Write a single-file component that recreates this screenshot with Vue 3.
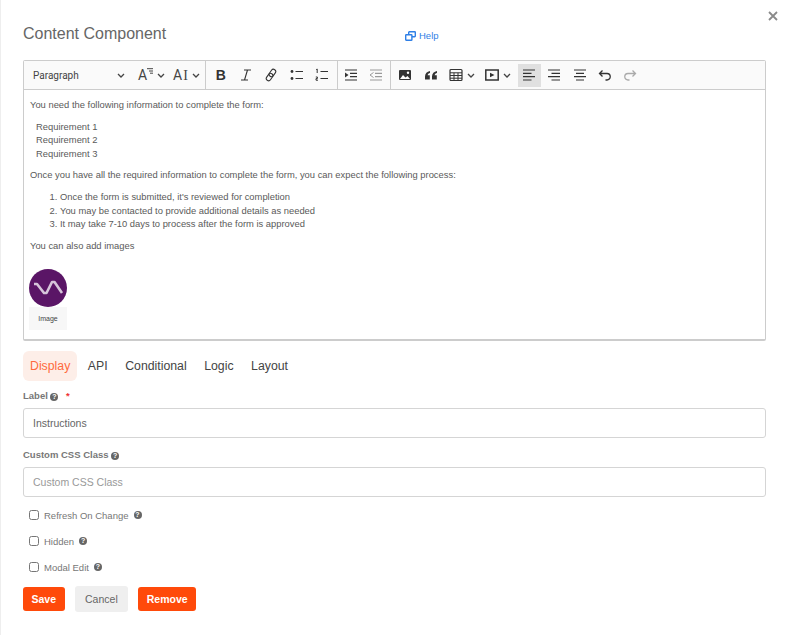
<template>
  <div class="modal">
    <button class="close" aria-label="Close">
      <svg width="10" height="10" viewBox="0 0 10 10"><path d="M1 1l8 8M9 1l-8 8" stroke="#8a8a8a" stroke-width="1.8" fill="none" /></svg>
    </button>
    <div class="header">
      <h2>Content Component</h2>
      <a class="help">
        <svg width="11" height="10" viewBox="0 0 11 10" fill="none" stroke="#2f7fe6" stroke-width="1.4">
          <rect x="3.7" y="0.7" width="6.6" height="5" rx="0.6" />
          <rect x="0.7" y="3.7" width="6.2" height="5.6" rx="0.6" fill="#fff" />
        </svg>
        Help
      </a>
    </div>

    <div class="editor">
      <div class="toolbar">
        <div class="group first">
          <div class="para">Paragraph<svg class="chev" viewBox="0 0 8 5"><path d="M1 1l3 3 3-3" /></svg></div>
          <div class="tool glyph">
            <span class="a-size">A<svg width="6" height="7" viewBox="0 0 6 7"><path d="M0 .7h6M2 3h4M3 5.2h3" stroke="#444" stroke-width="1" /></svg></span>
            <svg class="chev" viewBox="0 0 8 5"><path d="M1 1l3 3 3-3" /></svg>
          </div>
          <div class="tool glyph">
            <span class="a-i">A<i>I</i></span>
            <svg class="chev" viewBox="0 0 8 5"><path d="M1 1l3 3 3-3" /></svg>
          </div>
        </div>
        <div class="group marks">
          <div class="tool"><b class="bold">B</b></div>
          <div class="tool"><svg class="ic" viewBox="0 0 14 14"><path d="M5 2h7M2 12h7M8.5 2l-3 10" stroke="#333" stroke-width="1.1" fill="none" /></svg></div>
          <div class="tool"><svg class="ic" viewBox="0 0 14 14" fill="none" stroke="#333" stroke-width="1.1"><g transform="rotate(-55 7 7)"><rect x="0.500" y="4.700" width="8" height="4.600" rx="2.300" /><rect x="5.500" y="4.700" width="8" height="4.600" rx="2.300" /></g></svg></div>
          <div class="tool"><svg class="ic" viewBox="0 0 14 14"><circle cx="2" cy="3.5" r="1.4" fill="#333" /><circle cx="2" cy="10.5" r="1.4" fill="#333" /><path d="M5.5 3.5H13M5.5 10.5H13" stroke="#333" stroke-width="1.2" /></svg></div>
          <div class="tool"><svg class="ic" viewBox="0 0 14 14"><path d="M1.2 1.6l1-.6v4M.8 9h1.6v1.6H1v1.6h2M5.5 3.5H13M5.5 10.5H13" stroke="#333" stroke-width="1" fill="none" /></svg></div>
        </div>
        <div class="group indents">
          <div class="tool"><svg class="ic" viewBox="0 0 14 14"><path d="M1 2h12M6 5.3h7M6 8.7h7M1 12h12" stroke="#333" stroke-width="1.2" /><path d="M1 4.5L4.5 7 1 9.5z" fill="#333" /></svg></div>
          <div class="tool"><svg class="ic" viewBox="0 0 14 14"><path d="M1 2h12M6 5.3h7M6 8.7h7M1 12h12" stroke="#9a9a9a" stroke-width="1.2" /><path d="M4.5 4.5L1 7l3.5 2.5" fill="none" stroke="#9a9a9a" /></svg></div>
        </div>
        <div class="group last">
          <div class="tool"><svg class="ic" viewBox="0 0 14 14"><rect x="1" y="2" width="12" height="10" rx="1" fill="#333" /><path d="M2 11l3-4 2.500 2.500 2-1.500 2.500 3z" fill="#fff" /><circle cx="10" cy="4.800" r="1.200" fill="#fff" /></svg></div>
          <div class="tool"><svg class="ic" viewBox="0 0 14 14" fill="#333"><path d="M6 3C3 3.500 1 5.500 1 8.500V11.500h4.800V7.300H3.600C3.800 6 4.700 5.200 6 5zM13 3c-3 .5-5 2.500-5 5.500v3h4.800V7.300h-2.200C10.800 6 11.700 5.200 13 5z" /></svg></div>
          <div class="tool drop"><svg class="ic" viewBox="0 0 14 14" fill="none" stroke="#333" stroke-width="1"><rect x="1" y="1.500" width="12" height="11" rx="1" stroke-width="1.200" /><path d="M1 4.800h12M1 7.500h12M1 10.200h12M5 4.800v8M9 4.800v8" /></svg><svg class="chev" viewBox="0 0 8 5"><path d="M1 1l3 3 3-3" /></svg></div>
          <div class="tool drop"><svg class="ic" viewBox="0 0 14 14"><rect x="0.800" y="2" width="12.400" height="10" fill="none" stroke="#333" stroke-width="1.500" /><path d="M5 4.800L9.500 7 5 9.200z" fill="#333" /></svg><svg class="chev" viewBox="0 0 8 5"><path d="M1 1l3 3 3-3" /></svg></div>
          <div class="tool on"><svg class="ic" viewBox="0 0 14 14"><path d="M1 2h12M1 5.300h8.500M1 8.700h12M1 12h8.500" stroke="#333" stroke-width="1.200" /></svg></div>
          <div class="tool"><svg class="ic" viewBox="0 0 14 14"><path d="M1 2h12M4.500 5.300H13M1 8.700h12M4.500 12H13" stroke="#333" stroke-width="1.200" /></svg></div>
          <div class="tool"><svg class="ic" viewBox="0 0 14 14"><path d="M1 2h12M3 5.300h8M1 8.700h12M3 12h8" stroke="#333" stroke-width="1.200" /></svg></div>
          <div class="tool"><svg class="ic" viewBox="0 0 14 14" fill="none" stroke="#333" stroke-width="1.300"><path d="M4.500 2.500L1.500 5.500l3 3M1.500 5.500H9a3.200 3.200 0 010 6.500H7.500" /></svg></div>
          <div class="tool"><svg class="ic" viewBox="0 0 14 14" fill="none" stroke="#aaa" stroke-width="1.300"><path d="M9.500 2.500l3 3-3 3M12.500 5.500H5a3.200 3.200 0 000 6.500h1.500" /></svg></div>
        </div>
      </div>
      <div class="body">
        <p>You need the following information to complete the form:</p>
        <div class="reqs">
          <div v-for="r in requirements" :key="r">{{ r }}</div>
        </div>
        <p>Once you have all the required information to complete the form, you can expect the following process:</p>
        <ol>
          <li v-for="s in steps" :key="s">{{ s }}</li>
        </ol>
        <p>You can also add images</p>
        <figure>
          <svg width="38" height="38" viewBox="0 0 38 38">
            <circle cx="19" cy="19" r="19" fill="#5a1566" />
            <path d="M5 15h3l7 9h2.500l5.500-11h2.500L33 24" fill="none" stroke="#d6c4da" stroke-width="2.600" stroke-linejoin="round" />
          </svg>
          <figcaption>Image</figcaption>
        </figure>
      </div>
    </div>

    <div class="tabs">
      <a v-for="(t, i) in tabs" :key="t" :class="['tab', { active: i === 0 }]">{{ t }}</a>
    </div>

    <div class="field">
      <label>Label <span class="q">?</span> <span class="req">*</span></label>
      <input type="text" value="Instructions" />
    </div>
    <div class="field">
      <label>Custom CSS Class <span class="q">?</span></label>
      <input type="text" placeholder="Custom CSS Class" />
    </div>

    <div class="checks">
      <label v-for="c in checks" :key="c" class="check">
        <input type="checkbox" />
        <span>{{ c }}</span>
        <span class="q">?</span>
      </label>
    </div>

    <div class="actions">
      <button class="btn primary">Save</button>
      <button class="btn cancel">Cancel</button>
      <button class="btn primary">Remove</button>
    </div>
  </div>
</template>

<script setup>
const requirements = ['Requirement 1', 'Requirement 2', 'Requirement 3'];
const steps = [
  "Once the form is submitted, it's reviewed for completion",
  'You may be contacted to provide additional details as needed',
  'It may take 7-10 days to process after the form is approved',
];
const tabs = ['Display', 'API', 'Conditional', 'Logic', 'Layout'];
const checks = ['Refresh On Change', 'Hidden', 'Modal Edit'];
</script>

<style>
body {
  background: #fff;
}
</style>

<style scoped>
.modal {
  position: relative;
  width: 788px;
  height: 635px;
  box-sizing: border-box;
  padding: 24px 22px 0 23px;
  background: #fff;
  box-shadow: inset 1px 0 #eee;
  font-family: 'Liberation Sans', Arial, sans-serif;
  color: #555;
  overflow: hidden;
}
.close {
  position: absolute;
  top: 11px;
  right: 10px;
  padding: 0;
  border: 0;
  background: none;
}
.close svg {
  display: block;
}
.header {
  display: flex;
  align-items: flex-start;
  height: 36px;
}
h2 {
  margin: 0;
  width: 382px;
  font-size: 16px;
  line-height: 20px;
  font-weight: 400;
  color: #666;
}
.help {
  display: flex;
  align-items: center;
  gap: 3px;
  margin-top: 6px;
  font-size: 9.5px;
  line-height: 12px;
  color: #2f7fe6;
}
.editor {
  border: 1px solid #ccc;
  border-bottom-width: 2px;
  border-radius: 2px;
  height: 281px;
  box-sizing: border-box;
}
.toolbar {
  display: flex;
  height: 28px;
  background: #fafafa;
  border-bottom: 1px solid #ccc;
}
.group {
  display: flex;
  align-items: center;
  padding: 0 1px 0 2px;
  border-right: 1px solid #ccc;
}
.group.first {
  padding: 0 0 0 9px;
  width: 172px;
}
.group.marks {
  padding: 0 2px;
}
.group.indents {
  padding: 0 1px 0 0;
}
.group.last {
  border-right: 0;
}
.para {
  display: flex;
  align-items: center;
  justify-content: space-between;
  width: 92px;
  flex: none;
  margin-right: 9px;
  font-family: Roboto, 'Liberation Sans', sans-serif;
  font-size: 10px;
  color: #444;
}
.tool {
  display: flex;
  align-items: center;
  justify-content: center;
  gap: 4px;
  width: 25.4px;
  height: 23px;
  flex: none;
}
.tool.drop {
  width: 36.500px;
}
.tool.glyph {
  width: 35px;
}
.tool.on {
  width: 23px;
  background: #e0e0e0;
  margin: 0 1px;
}
.ic {
  width: 14px;
  height: 14px;
  display: block;
}
.chev {
  width: 8px;
  height: 5px;
  fill: none;
  stroke: #444;
  stroke-width: 1.300;
  flex: none;
}
.a-size,
.a-i {
  display: inline-flex;
  align-items: flex-start;
  font-family: Roboto, 'Liberation Sans', sans-serif;
  font-size: 14px;
  line-height: 15px;
  color: #444;
}
.a-i i {
  font-family: 'Liberation Serif', serif;
  font-style: normal;
  margin-left: 1px;
}
.bold {
  font-size: 14px;
  color: #333;
}
.body {
  padding: 8px 6px 0;
  font-size: 9.400px;
  line-height: 13.600px;
  color: #5a5a5a;
}
.body p {
  margin: 0 0 8px;
}
.reqs {
  margin: 0 0 8px 6px;
}
ol {
  margin: 0 0 8px;
  padding-left: 30px;
}
figure {
  margin: 17px 0 0 -1px;
  width: 38px;
}
figure svg {
  display: block;
}
figcaption {
  height: 23px;
  line-height: 23px;
  background: #f7f7f7;
  text-align: center;
  font-size: 7px;
  color: #444;
}
.tabs {
  display: flex;
  gap: 3.500px;
  margin-top: 10px;
  height: 30px;
}
.tab {
  padding: 0 7px;
  line-height: 30px;
  font-size: 12.300px;
  color: #444;
  border-radius: 6px;
}
.tab.active {
  background: #fdeee8;
  color: #ff6a3d;
}
.field {
  margin-top: 8px;
}
.field + .field {
  margin-top: 10px;
}
.field label {
  display: block;
  height: 13px;
  margin-bottom: 6px;
  font-size: 9.500px;
  line-height: 13px;
  font-weight: 700;
  color: #777;
}
.field input {
  display: block;
  width: 100%;
  height: 30px;
  box-sizing: border-box;
  padding: 0 9px;
  border: 1px solid #d5d5d5;
  border-radius: 3px;
  font-family: inherit;
  font-size: 10.500px;
  color: #666;
  outline: none;
}
.field input::placeholder {
  color: #999;
}
.q {
  display: inline-block;
  width: 8px;
  height: 8px;
  border-radius: 50%;
  background: #666;
  color: #fff;
  font-size: 7px;
  line-height: 8px;
  font-weight: 700;
  text-align: center;
  vertical-align: 0.500px;
}
.req {
  margin-left: 5px;
  color: #e33;
}
.checks {
  display: flex;
  flex-direction: column;
  gap: 6px;
  margin: 8px 0 0 6px;
}
.check {
  display: flex;
  align-items: center;
  gap: 5px;
  height: 20px;
  font-size: 9.500px;
  color: #777;
}
.check input {
  width: 10px;
  height: 10px;
  margin: 0;
}
.check .q {
  margin-left: 0;
}
.actions {
  display: flex;
  align-items: center;
  gap: 10px;
  margin-top: 9px;
}
.btn {
  height: 24px;
  padding: 0 8.500px;
  border: 0;
  border-radius: 3px;
  font-family: inherit;
  font-size: 10.500px;
}
.primary {
  background: #ff4a0a;
  color: #fff;
  font-weight: 700;
}
.cancel {
  height: 26px;
  padding: 0 10.500px;
  background: #efefef;
  color: #666;
}
</style>
